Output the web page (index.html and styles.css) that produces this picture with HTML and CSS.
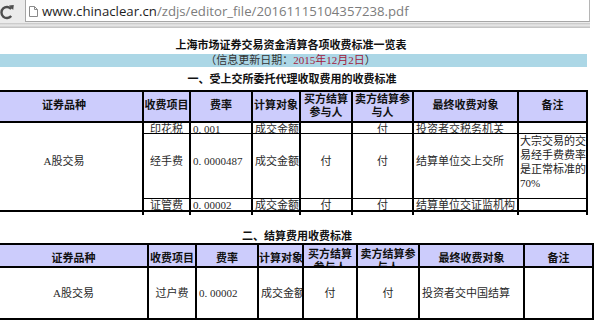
FILE: index.html
```html
<!DOCTYPE html>
<html lang="zh-CN">
<head>
<meta charset="utf-8">
<title>上海市场证券交易资金清算各项收费标准一览表</title>
<link rel="stylesheet" href="styles.css">
</head>
<body>
<div class="toolbar">
  <svg class="reload" width="25" height="23" viewBox="0 0 25 23">
    <path d="M11.2 9 A5.5 5.5 0 1 0 11.2 16" fill="none" stroke="#4d4d4d" stroke-width="2.4"/>
    <polygon points="9,5.6 13.8,5 13.2,10" fill="#4d4d4d"/>
  </svg>
  <div class="omnibox">
    <svg class="pageicon" width="9" height="11" viewBox="0 0 9 11">
      <path d="M0.5 0.5 H5.5 L8.5 3.5 V10.5 H0.5 Z" fill="#fff" stroke="#8a8a8a"/>
      <path d="M5.5 0.5 V3.5 H8.5" fill="none" stroke="#8a8a8a"/>
    </svg>
    <span class="host">www.chinaclear.cn</span><span class="path">/zdjs/editor_file/20161115104357238.pdf</span>
  </div>
</div>
<div class="toolbar-edge"></div>

<div class="page">
  <div class="title">上海市场证券交易资金清算各项收费标准一览表</div>
  <div class="band">（信息更新日期：<span class="date">2015年12月2日</span>）</div>
  <div class="heading h1">一、受上交所委托代理收取费用的收费标准</div>

  <div class="grid t1">
    <div class="cell hd first">证券品种</div>
    <div class="cell hd">收费项目</div>
    <div class="cell hd">费率</div>
    <div class="cell hd">计算对象</div>
    <div class="cell hd two">买方结算参与人</div>
    <div class="cell hd two">卖方结算参与人</div>
    <div class="cell hd">最终收费对象</div>
    <div class="cell hd">备注</div>

    <div class="cell span3 first c">A股交易</div>
    <div class="cell top c">印花税</div>
    <div class="cell top l">0. 001</div>
    <div class="cell top l">成交金额</div>
    <div class="cell top"></div>
    <div class="cell top c">付</div>
    <div class="cell top l">投资者交税务机关</div>
    <div class="cell top"></div>

    <div class="cell mid c">经手费</div>
    <div class="cell mid l">0. 0000487</div>
    <div class="cell mid l">成交金额</div>
    <div class="cell mid c">付</div>
    <div class="cell mid c">付</div>
    <div class="cell mid l">结算单位交上交所</div>
    <div class="cell note">大宗交易的交易经手费费率是正常标准的70%</div>

    <div class="cell top last c">证管费</div>
    <div class="cell top last l">0. 00002</div>
    <div class="cell top last l">成交金额</div>
    <div class="cell top last c">付</div>
    <div class="cell top last c">付</div>
    <div class="cell top last l">结算单位交证监机构</div>
    <div class="cell top last"></div>

    <div class="cell"></div>
    <div class="cell"></div>
    <div class="cell"></div>
    <div class="cell"></div>
    <div class="cell"></div>
    <div class="cell"></div>
    <div class="cell"></div>
    <div class="cell"></div>
  </div>

  <div class="heading h2">二、结算费用收费标准</div>

  <div class="grid t2">
    <div class="cell hd">证券品种</div>
    <div class="cell hd">收费项目</div>
    <div class="cell hd">费率</div>
    <div class="cell hd tight">计算对象</div>
    <div class="cell hd two">买方结算参与人</div>
    <div class="cell hd two">卖方结算参与人</div>
    <div class="cell hd">最终收费对象</div>
    <div class="cell hd">备注</div>

    <div class="cell c">A股交易</div>
    <div class="cell c">过户费</div>
    <div class="cell l">0. 00002</div>
    <div class="cell l">成交金额</div>
    <div class="cell c">付</div>
    <div class="cell c">付</div>
    <div class="cell l">投资者交中国结算</div>
    <div class="cell"></div>
  </div>
</div>
</body>
</html>
```

FILE: styles.css
```css
html, body {
  margin: 0;
  padding: 0;
}
body {
  width: 600px;
  height: 327px;
  overflow: hidden;
  background: #fff;
  font-family: "Noto Sans CJK SC", sans-serif;
  color: #111;
}

/* browser chrome */
.toolbar {
  display: flex;
  align-items: flex-start;
  width: 590px;
  height: 23px;
  background: #ebebeb;
}
.reload {
  flex: none;
  display: block;
}
.omnibox {
  flex: 1;
  height: 23px;
  margin-top: -1px;
  box-sizing: border-box;
  border: 1px solid #a6a6a6;
  border-right-color: #b5b5b5;
  background: #fff;
  display: flex;
  align-items: center;
  padding-left: 3px;
  font-family: "Open Sans", "Liberation Sans", sans-serif;
  font-size: 13.2px;
  white-space: nowrap;
  overflow: hidden;
}
.pageicon {
  flex: none;
  margin-right: 4px;
  margin-top: 1px;
}
.host {
  color: #1e1e1e;
}
.path {
  color: #7c7c7c;
}
.toolbar-edge {
  width: 590px;
  height: 5px;
  background: linear-gradient(#c4c4c4, #e9e9e9 45%, #bdbdbd);
}

/* page */
.page {
  width: 590px;
}
.title {
  font-weight: 700;
  font-size: 11px;
  line-height: 12px;
  padding: 10px 8px 4px 0;
  text-align: center;
}
.band {
  width: 587px;
  height: 13px;
  line-height: 13px;
  background: #acd7e6;
  font-family: "Liberation Serif", "Noto Sans CJK SC", serif;
  font-size: 11px;
  color: #333;
  text-align: center;
  padding-right: 6px;
  box-sizing: border-box;
}
.date {
  color: #a1203d;
}
.heading {
  font-weight: 700;
  font-size: 11px;
  line-height: 12px;
  text-align: center;
}
.h1 {
  padding: 5px 6px 6px 0;
}
.h2 {
  padding: 14px 0 2px 4px;
}

/* tables */
.grid {
  display: grid;
  column-gap: 2px;
  row-gap: 1px;
  width: max-content;
  background: #000;
  border-top: 2px solid #000;
  border-right: 2px solid #000;
}
.t1 {
  grid-template-columns: 142px 45px 60px 46px 50px 59px 103px 67px;
  grid-template-rows: 30px 10px 64px 12px 3px;
}
.t2 {
  grid-template-columns: 147px 46px 60px 43px 52px 60px 103px 67px;
  grid-template-rows: 22px 50px;
  border-bottom: 2px solid #000;
}
.cell {
  box-sizing: border-box;
  background: #fff;
  overflow: hidden;
  display: flex;
  align-items: center;
  font-family: "Liberation Serif", "Noto Sans CJK SC", serif;
  font-size: 11px;
  line-height: 12px;
  color: #2a2a2a;
  white-space: nowrap;
}
.hd {
  background: #ccccfc;
  border-bottom: 1px solid #000;
  font-family: "Noto Sans CJK SC", sans-serif;
  font-weight: 700;
  color: #111;
  justify-content: center;
  text-align: center;
  white-space: normal;
  line-height: 12.5px;
}
.t1 .hd {
  padding-bottom: 4px;
}
.t2 .hd {
  padding-top: 3px;
}
.hd.tight {
  white-space: nowrap;
  justify-content: flex-start;
}
.hd.two {
  align-items: flex-start;
  padding: 0;
}
.t2 .hd.two {
  padding-top: 2px;
}
.t1 .first {
  padding-right: 14px;
}
.c {
  justify-content: center;
}
.l {
  justify-content: flex-start;
  padding-left: 2px;
}
.top {
  align-items: flex-start;
}
.mid {
  padding-bottom: 10px;
}
.last {
  border-bottom: 1px solid #000;
}
.span3 {
  grid-row: 2 / span 3;
  grid-column: 1;
  border-bottom: 1px solid #000;
  padding-bottom: 12px;
}
.note {
  align-items: flex-start;
  white-space: normal;
  word-break: break-all;
  line-height: 14px;
  padding: 0 0 0 1px;
  color: #222;
}
```
